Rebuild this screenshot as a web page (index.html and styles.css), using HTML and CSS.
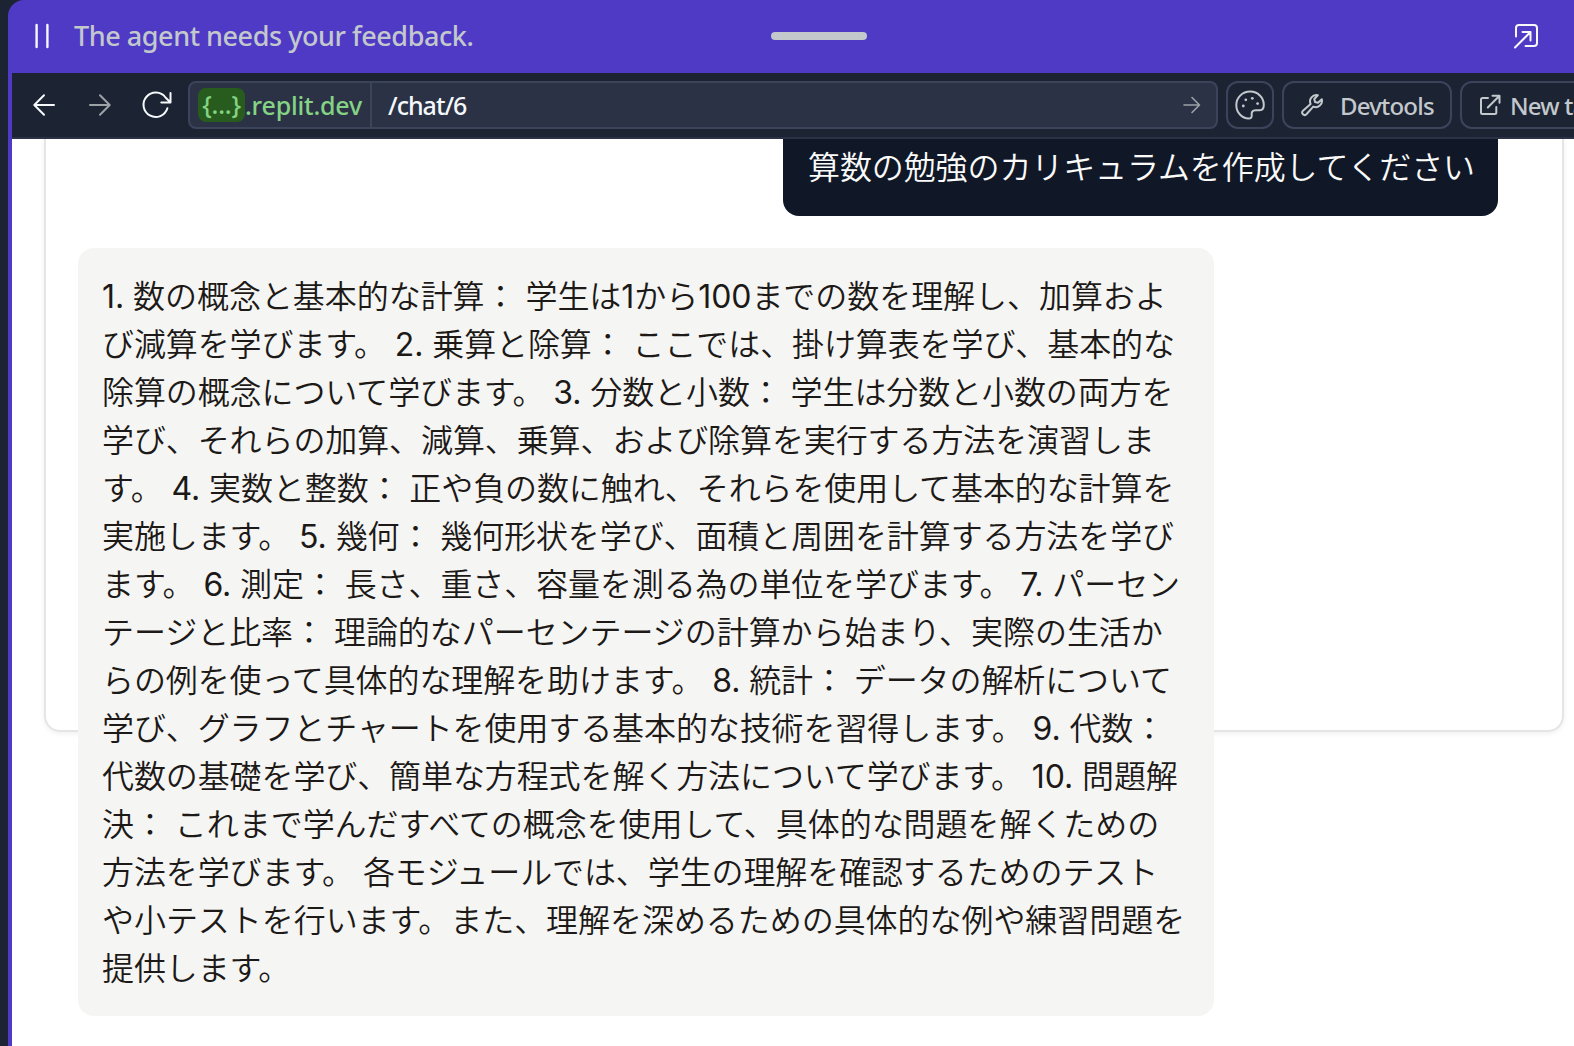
FILE: index.html
```html
<!DOCTYPE html>
<html lang="ja">
<head>
<meta charset="utf-8">
<title>/chat/6</title>
<link rel="stylesheet" href="styles.css">
</head>
<body>
<div class="window">
  <header class="agent-bar">
    <svg class="pause" width="16" height="26" viewBox="0 0 16 26"><path d="M2.600 2v22M13.400 2v22"/></svg>
    <span class="agent-text">The agent needs your feedback.</span>
    <span class="handle"></span>
    <svg class="popout" width="26" height="26" viewBox="0 0 26 26"><path d="M3 13.500V5a3 3 0 0 1 3-3h15a3 3 0 0 1 3 3v15a3 3 0 0 1-3 3h-8.500M2 24.500L17.500 9M9.500 9h8v8.500"/></svg>
  </header>
  <div class="frame">
    <nav class="toolbar">
      <svg class="back" width="24" height="24" viewBox="0 0 24 24"><path d="M22 12H2.500M12 2.300L2.300 12l9.700 9.700"/></svg>
      <svg class="forward" width="24" height="24" viewBox="0 0 24 24"><path d="M2 12h19.500M12 2.300l9.700 9.700-9.700 9.700"/></svg>
      <svg class="reload" width="32" height="30" viewBox="0 0 32 30"><path d="M26.400 18.300A12.200 12.200 0 1 1 24.500 7.500L29.500 12.500M29.500 3v9.600h-9.200"/></svg>
      <div class="address">
        <div class="host"><span class="pill">{...}</span><span class="domain">.replit.dev</span></div>
        <div class="path">/chat/6</div>
        <svg class="go" width="18" height="18" viewBox="0 0 18 18"><path d="M1 9h15M9 1.500L16.500 9 9 16.500"/></svg>
      </div>
      <div class="btn palette">
        <svg width="32" height="32" viewBox="0 0 32 32"><path d="M16.300 2.600C8 2.600 2.300 8.800 2.300 16c0 8 6.200 13.600 12.200 13.600 2.400 0 3.400-1.100 3.200-3.200-.3-3.200.5-5.200 3.800-5.200h4.300c2.600 0 4-2.200 4-5.400C29.800 8.500 23.800 2.600 16.300 2.600z"/><g class="dots"><circle cx="9.300" cy="17" r="1.400"/><circle cx="11.800" cy="10.800" r="1.400"/><circle cx="18.300" cy="9.300" r="1.400"/><circle cx="23.600" cy="14.600" r="1.400"/></g></svg>
      </div>
      <div class="btn devtools">
        <svg width="24" height="24" viewBox="0 0 24 24"><path d="M17.800 2.300a6.300 6.300 0 0 0-7.200 8.700L2.700 18a2.500 2.500 0 0 0 3.500 3.500l7.100-7.900a6.300 6.300 0 0 0 8.500-7.400L18 9.700l-3-.7-.7-3z"/></svg>
        <span>Devtools</span>
      </div>
      <div class="btn newtab">
        <svg width="22" height="22" viewBox="0 0 22 22"><path d="M9 4H3.500A1.500 1.500 0 0 0 2 5.500v13A1.500 1.500 0 0 0 3.500 20h12.300a1.500 1.500 0 0 0 1.500-1.500V13M13.500 1.800H20.500v7M20.500 1.800L8.800 13.500"/></svg>
        <span>New tab</span>
      </div>
    </nav>
    <main class="page">
      <section class="card">
        <div class="msg user">算数の勉強のカリキュラムを作成してください</div>
        <div class="msg reply">
          <p class="loose"><span class="num">1.</span> 数の概念と基本的な計算： 学生は<span class="num">1</span>から<span class="num">100</span>までの数を理解し、加算およ</p>
          <p>び減算を学びます。 <span class="num">2.</span> 乗算と除算： ここでは、掛け算表を学び、基本的な</p>
          <p>除算の概念について学びます。 <span class="num">3.</span> 分数と小数： 学生は分数と小数の両方を</p>
          <p>学び、それらの加算、減算、乗算、および除算を実行する方法を演習しま</p>
          <p>す。 <span class="num">4.</span> 実数と整数： 正や負の数に触れ、それらを使用して基本的な計算を</p>
          <p>実施します。 <span class="num">5.</span> 幾何： 幾何形状を学び、面積と周囲を計算する方法を学び</p>
          <p>ます。 <span class="num">6.</span> 測定： 長さ、重さ、容量を測る為の単位を学びます。 <span class="num">7.</span> パーセン</p>
          <p class="loose">テージと比率： 理論的なパーセンテージの計算から始まり、実際の生活か</p>
          <p>らの例を使って具体的な理解を助けます。 <span class="num">8.</span> 統計： データの解析について</p>
          <p>学び、グラフとチャートを使用する基本的な技術を習得します。 <span class="num">9.</span> 代数：</p>
          <p>代数の基礎を学び、簡単な方程式を解く方法について学びます。 <span class="num">10.</span> 問題解</p>
          <p class="loose">決： これまで学んだすべての概念を使用して、具体的な問題を解くための</p>
          <p>方法を学びます。 各モジュールでは、学生の理解を確認するためのテスト</p>
          <p class="loose">や小テストを行います。また、理解を深めるための具体的な例や練習問題を</p>
          <p>提供します。</p>
        </div>
      </section>
    </main>
  </div>
</div>
</body>
</html>
```

FILE: styles.css
```css
* { box-sizing: border-box; }
body {
  margin: 0;
  height: 1046px;
  overflow: hidden;
  background: #1c2333;
  font-family: "Noto Sans", sans-serif;
}
svg { display: block; flex: none; fill: none; stroke: currentColor; stroke-width: 2; stroke-linecap: round; stroke-linejoin: round; }
.window {
  height: 1046px;
  margin-left: 8px;
  display: flex;
  flex-direction: column;
  background: #4f3ac6;
  border-top-left-radius: 16px;
  overflow: hidden;
}
.agent-bar {
  flex: none;
  height: 73px;
  padding-bottom: 1px;
  display: flex;
  align-items: center;
  color: #f5f9fc;
}
.pause { margin-left: 26px; stroke-width: 2.4; }
.agent-text { width: 697px; margin-left: 24px; padding-bottom: 2px; font-size: 27px; font-weight: 500; letter-spacing: -.45px; color: #c2c8cc; white-space: nowrap; }
.handle { width: 96px; height: 8px; border-radius: 4px; background: #c2c8cc; }
.popout { margin-left: 646px; }
.frame {
  flex: 1;
  min-height: 0;
  margin-left: 4px;
  display: flex;
  flex-direction: column;
  overflow: hidden;
}
.toolbar {
  flex: none;
  height: 66px;
  display: flex;
  align-items: center;
  padding-left: 20px;
  background: #1c2333;
  border-bottom: 2px solid #2b3245;
  color: #f5f9fc;
  font-size: 25px;
  font-weight: 500;
  letter-spacing: -.2px;
  white-space: nowrap;
}
.forward { margin-left: 32px; color: #9da2a6; }
.reload { margin-left: 29px; }
.address {
  flex: none;
  width: 1030px;
  height: 48px;
  margin-left: 15px;
  display: flex;
  align-items: center;
  background: #2b3245;
  border: 2px solid #3c445c;
  border-radius: 8px;
}
.host {
  width: 182px;
  height: 44px;
  padding-left: 8px;
  display: flex;
  align-items: center;
  border-right: 2px solid #3c445c;
  color: #85d384;
}
.pill { width: 47px; height: 34px; border-radius: 8px; background: #275c1e; line-height: 32px; text-align: center; }
.path { flex: 1; padding-left: 16px; letter-spacing: -1px; }
.go { margin-right: 15px; color: #9da2a6; stroke-width: 1.6; }
.btn {
  flex: none;
  height: 48px;
  margin-left: 8px;
  display: flex;
  align-items: center;
  border: 2px solid #3c445c;
  border-radius: 12px;
  color: #c2c8cc;
  font-size: 24px;
  letter-spacing: -.8px;
}
.palette { width: 48px; justify-content: center; }
.dots { fill: currentColor; stroke: none; }
.devtools { width: 170px; padding-left: 16px; gap: 16px; }
.newtab { width: 170px; padding-left: 17px; gap: 9px; }
.page {
  flex: 1;
  min-height: 0;
  padding: 0 10px 0 32px;
  background: #fff;
  overflow: hidden;
}
.card {
  height: 593px;
  padding: 0 64px 0 32px;
  display: flex;
  flex-direction: column;
  gap: 32px;
  border: 2px solid #e5e5e5;
  border-top: 0;
  border-radius: 0 0 16px 16px;
  box-shadow: 0 2px 5px rgba(0, 0, 0, .06);
  font: 350 32px/48px "Inter", "Noto Sans CJK JP DemiLight", "Noto Sans CJK JP", sans-serif;
  letter-spacing: -.1px;
}
.msg { flex: none; white-space: nowrap; }
.msg p { margin: 0; }
.msg .loose { letter-spacing: -.05px; }
.num { font-weight: 400; }
.user {
  align-self: flex-end;
  width: 715px;
  padding: 5px 24px 24px 25px;
  background: #101828;
  color: #fafaf9;
  border-radius: 0 0 16px 16px;
}
.reply {
  width: 1136px;
  height: 768px;
  padding: 25px 24px 23px;
  background: #f5f5f4;
  color: #1c1917;
  border-radius: 16px;
}
```
